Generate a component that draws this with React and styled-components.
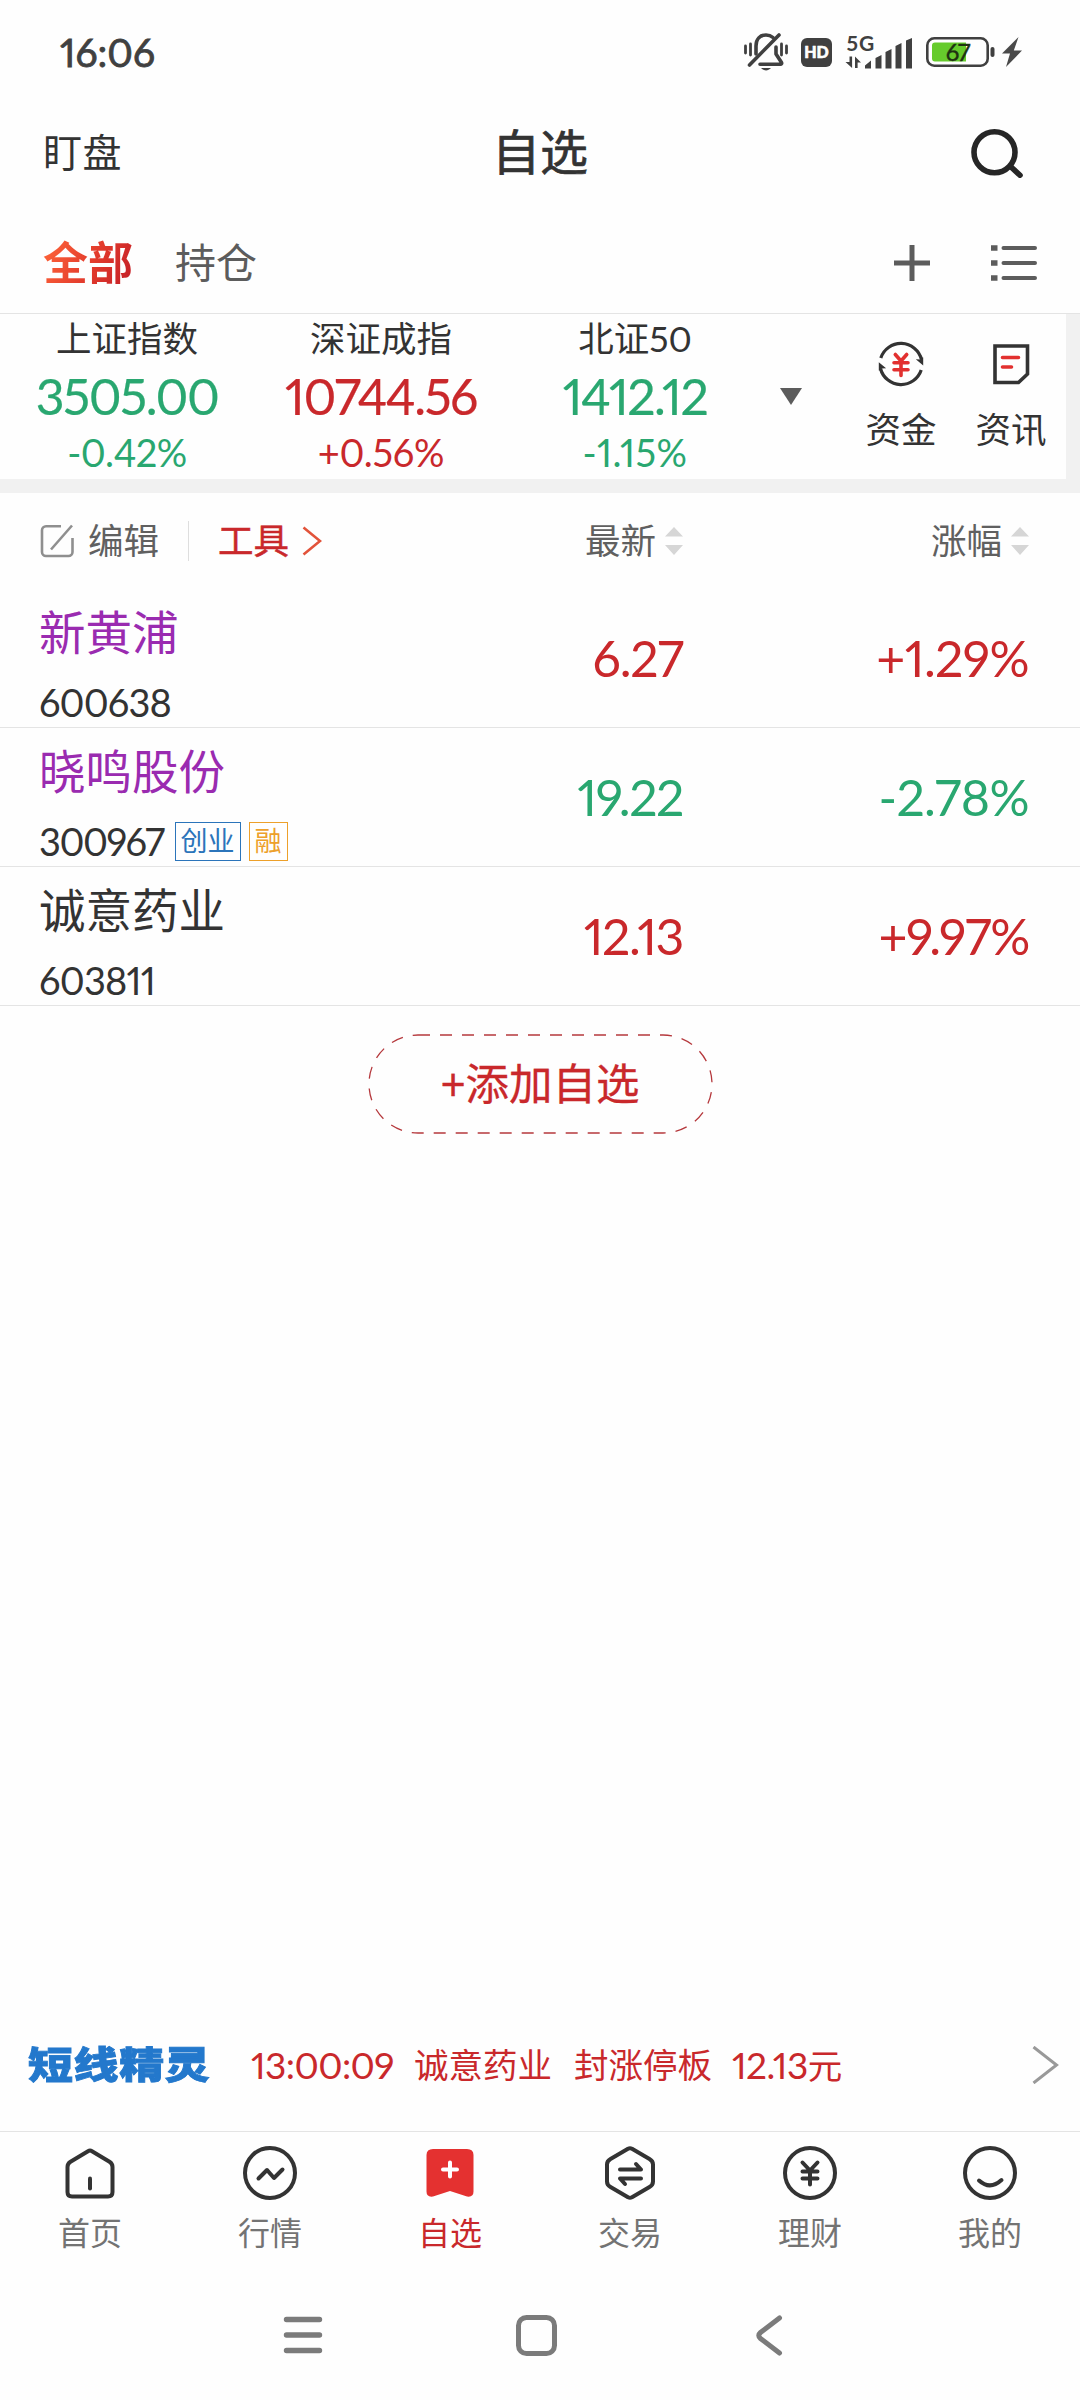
import React from 'react';
import styled, { createGlobalStyle } from 'styled-components';

const GlobalStyle = createGlobalStyle`
* {
  box-sizing: border-box;
}
body {
  margin: 0;
  background: #fefefe;
  font-family: Lato, 'Noto Sans CJK SC', sans-serif;
  font-variant-numeric: proportional-nums;
  color: #333;
}
svg {
  display: block;
  flex: none;
}
`;

const RED = '#c9282b';
const GREEN = '#29a770';
const DARK = '#333333';
const PURPLE = '#9a2bb0';

const Page = styled.div`
display: flex;
flex-direction: column;
width: 1080px;
height: 2400px;
background: #fefefe;
white-space: nowrap;
overflow: hidden;`

const StatusBar = styled.div`
display: flex;
align-items: center;
justify-content: space-between;
height: 104px;
padding: 0 58px 0 60px;`

const Clock = styled.span`
font-size: 39px;
line-height: 50px;
color: #404040;
-webkit-text-stroke: 0.8px #404040;`

const StatusIcons = styled.div`
display: flex;
align-items: center;
gap: 13px;
svg:last-child {
  margin-left: -6px;
}`

const Header = styled.header`
display: grid;
grid-template-columns: 1fr auto 1fr;
align-items: center;
height: 96px;
padding: 0 54px 0 43px;`

const Watch = styled.span`
font-size: 39px;
line-height: 60px;
letter-spacing: 0.6px;`

const Title = styled.h1`
margin: 0 0 0 11px;
font-size: 48px;
font-weight: 400;
line-height: 60px;
-webkit-text-stroke: 0.7px #333;`

const HeaderRight = styled.div`
display: flex;
justify-content: flex-end;`

const Tabs = styled.div`
display: flex;
align-items: center;
height: 114px;
padding: 13px 42px 0 43px;
border-bottom: 1px solid #e4e4e4;`

const Tab = styled.span`
font-size: 41px;
line-height: 60px;
color: #5c5c5c;
margin-right: auto;`

const ActiveTab = styled(Tab)`
font-size: 45px;
font-weight: 700;
margin-right: 42px;
color: transparent;
background: linear-gradient(115deg, #fb6038 10%, #e23a2c 55%, #c41f27 95%);
background-clip: text;
-webkit-background-clip: text;`

const TabIcons = styled.div`
display: flex;
align-items: center;
gap: 61px;`

const IndexPanel = styled.section`
display: flex;
height: 179px;
border-right: 14px solid #f1f1f1;
border-bottom: 14px solid #f1f1f1;`

const IndexCell = styled.div`
width: 254px;
text-align: center;`

const IndexName = styled.div`
font-size: 35.5px;
line-height: 50px;`

const IndexValue = styled.div`
font-size: 50px;
line-height: 64px;
letter-spacing: -1.5px;
color: ${p => p.$color};
-webkit-text-stroke: 0.2px ${p => p.$color};`

const IndexChange = styled.div`
font-size: 38px;
line-height: 48px;
letter-spacing: ${p => p.$gap || 0}px;
color: ${p => p.$color};`

const DropCell = styled.div`
width: 84px;
padding: 74px 0 0 18px;`

const Quick = styled.div`
display: flex;
flex-direction: column;
align-items: center;
width: 110px;
padding-top: 27px;`

const QuickLabel = styled.span`
margin-top: 23px;
font-size: 35.5px;
line-height: 40px;`

const ListGrid = styled.div`
display: grid;
grid-template-columns: 380px 264px 346px;
padding-left: 39px;`

const ListHead = styled(ListGrid)`
align-items: center;
height: 96px;
font-size: 35.5px;
line-height: 50px;
color: #606060;`

const Tools = styled.div`
display: flex;
align-items: center;`

const EditLabel = styled.span`
margin-left: 13px;`

const Divider = styled.span`
width: 1px;
height: 40px;
margin: 0 29px 0 29px;
background: #dedede;`

const ToolLabel = styled.span`
margin-right: 13px;
color: ${RED};
-webkit-text-stroke: 0.5px ${RED};`

const SortHead = styled.div`
display: flex;
align-items: center;
justify-content: flex-end;
gap: 9px;`

const StockRow = styled(ListGrid)`
height: 139px;
border-bottom: 1px solid #e4e4e4;`

const StockName = styled.div`
margin-top: 13px;
font-size: 46.5px;
line-height: 60px;
color: ${p => p.$color};`

const CodeLine = styled.div`
display: flex;
align-items: center;
height: 46px;
margin-top: 17px;`

const Code = styled.span`
font-size: 38px;
letter-spacing: ${p => p.$gap || 0}px;
margin-right: 11px;`

const Tag = styled.span`
height: 39px;
margin-right: 8px;
padding: 0 5px;
border: 1px solid ${p => p.$color};
color: ${p => p.$color};
font-size: 27px;
line-height: 36px;`

const Figure = styled.div`
align-self: center;
text-align: right;
font-size: 50px;
line-height: 60px;
letter-spacing: ${p => p.$gap || 0}px;
color: ${p => p.$color};`

const AddButton = styled.button`
position: relative;
align-self: center;
width: 345px;
height: 100px;
margin-top: 28px;
padding: 0 0 2px;
border: none;
background: none;
font: inherit;
font-size: 43.5px;
line-height: 98px;
color: ${RED};
-webkit-text-stroke: 0.3px ${RED};`

const AddOutline = styled.svg`
position: absolute;
inset: 0;`

const Ticker = styled.div`
display: flex;
align-items: center;
height: 132px;
margin-top: auto;
padding: 0 21px 0 28px;
color: ${RED};
font-size: 34.5px;
line-height: 50px;`

const TickerLogo = styled.span`
width: 223px;
font-size: 45px;
font-weight: 900;
letter-spacing: 0.6px;
color: #2378cc;
-webkit-text-stroke: 1px #2378cc;
transform: scaleY(0.83);`

const TickerTime = styled.span`
width: 163px;
font-size: 37px;
letter-spacing: -0.6px;`

const TickerText = styled.span`
width: ${p => p.$width}px;`

const TickerPrice = styled.span`
margin-right: auto;
letter-spacing: -0.6px;
big {
  font-size: 37px;
}`

const BottomNav = styled.nav`
display: flex;
height: 139px;
border-top: 1px solid #e4e4e4;`

const NavItem = styled.div`
display: flex;
flex-direction: column;
align-items: center;
width: 180px;
padding-top: 14px;
color: ${p => (p.$active ? RED : '#737373')};
font-size: 32px;
line-height: 40px;`

const NavLabel = styled.span`
margin-top: 13px;`

const SystemNav = styled.div`
display: flex;
align-items: center;
height: 130px;
padding-left: 283px;
gap: 193px;
svg:last-child {
  margin-left: 5px;
}`

const BellOff = () => (
  <svg width="44" height="38" viewBox="0 0 44 38" fill="none" stroke="#404040" strokeWidth="3.6" strokeLinecap="round" strokeLinejoin="round">
    <path d="M12 21V13C12 6 16 2 22 2c2.500 0 5 .8 7 2.500" />
    <path d="M32 14v7l5.500 8.500c.5 1-.2 1.800-1 1.800H16" />
    <path d="M5.500 32L35 2" />
    <path d="M1.500 13v7M6.500 11v11M37.500 11v11M42.500 13v7" strokeWidth="2.800" />
    <path d="M17 35c3 3.200 7 3.200 10 0z" fill="#404040" stroke="none" />
  </svg>
);

const HdIcon = () => (
  <svg width="31" height="29" viewBox="0 0 31 29">
    <rect width="31" height="29" rx="6" fill="#404040" />
    <text x="15.500" y="20.200" fontSize="16" fontWeight="900" textAnchor="middle" fill="#fff" stroke="#fff" strokeWidth=".6">HD</text>
  </svg>
);

const SignalIcon = () => (
  <svg width="68" height="52" viewBox="0 -8 68 52" fill="#404040">
    <text x="1.500" y="16.500" fontSize="21" fontWeight="700" letterSpacing="1">5G</text>
    <path d="M4.500 22.500h2.600V34L.5 28h4zM10 34V22.500l6 6h-3.400V34z" />
    <path d="M20 34.500v-3l6-5v8zM30.500 34.500V24l6-3v13.500zM40.500 34.500V18l6-3v19.500zM50.500 34.500V12l6-3v25.500zM61 34.500V6.500l6-2.500v30.500z" />
  </svg>
);

const BatteryIcon = () => (
  <svg width="69" height="30" viewBox="0 0 69 30">
    <rect x="1.300" y="1.300" width="60.400" height="27.400" rx="7" fill="none" stroke="#404040" strokeWidth="2.600" />
    <path d="M9 5.500h31v19H9a3 3 0 0 1-3-3v-13a3 3 0 0 1 3-3z" fill="#66cb2c" />
    <rect x="64.500" y="10" width="4" height="10" rx="2" fill="#404040" />
    <text x="31.500" y="23.500" fontSize="24" letterSpacing="-1.200" textAnchor="middle" fill="#1e3311" stroke="#1e3311" strokeWidth=".4">67</text>
  </svg>
);

const BoltIcon = () => (
  <svg width="20" height="30" viewBox="0 0 20 30">
    <path d="M16.500 0L0 16.500h8L4 30l16-16.500h-8.200z" fill="#4a4a4a" />
  </svg>
);

const SearchIcon = () => (
  <svg width="56" height="52" viewBox="0 0 56 52" fill="none" stroke="#262626" strokeWidth="5.600" strokeLinecap="round">
    <circle cx="24.500" cy="26.300" r="20.500" />
    <path d="M40.500 40.500l9.500 8.700" />
  </svg>
);

const PlusIcon = () => (
  <svg width="36" height="36" viewBox="0 0 36 36" stroke="#5c5c5c" strokeWidth="5">
    <path d="M18 0v36M0 18h36" />
  </svg>
);

const ListIcon = () => (
  <svg width="47" height="38" viewBox="0 0 47 38" stroke="#5c5c5c" strokeWidth="4" strokeLinecap="round">
    <path d="M12.500 4h31.500M12.500 19h31.500M12.500 34h31.500" />
    <path d="M0 4h6.500M0 19h6.500M0 34h6.500" strokeWidth="5.500" strokeLinecap="butt" />
  </svg>
);

const DropIcon = () => (
  <svg width="22" height="17" viewBox="0 0 22 17">
    <path d="M0 0h22L11 17z" fill="#5c5c5c" />
  </svg>
);

const FundIcon = () => (
  <svg width="46" height="46" viewBox="0 0 46 46" fill="none" strokeLinecap="round" strokeLinejoin="round">
    <path d="M2.800 17A21.200 21.200 0 0 1 43.500 18.500M43.200 29A21.200 21.200 0 0 1 2.500 27.500" stroke="#333" strokeWidth="3.200" strokeLinecap="butt" />
    <path d="M45.200 24.500V16.500h-3l.3 2-4.700-.3zM.8 21.300V29.500h3l-.3-2 4.600-.2z" fill="#333" />
    <path d="M17.300 13.500l5.700 6.500 5.700-6.500M23 20v14.500M16 21.800h14M16 28.800h14" stroke="#e2302f" strokeWidth="3.600" />
  </svg>
);

const NewsIcon = () => (
  <svg width="38" height="46" viewBox="0 0 38 46" fill="none" strokeLinejoin="miter">
    <path d="M3 5h32.500v28L26.500 41.500H3z" stroke="#333" strokeWidth="3.600" />
    <path d="M10.500 16.500h16M10.500 26h9" stroke="#e2302f" strokeWidth="3.600" strokeLinecap="round" />
  </svg>
);

const EditIcon = () => (
  <svg width="36" height="34" viewBox="0 0 36 34" fill="none" stroke="#8f8f8f" strokeWidth="2.600">
    <path d="M22 2.200H7a4 4 0 0 0-4 4V28a4 4 0 0 0 4 4h22.500a4 4 0 0 0 4-4V14" />
    <path d="M33 1.500L12 25.500" />
  </svg>
);

const ToolArrow = () => (
  <svg width="20" height="30" viewBox="0 0 20 30" fill="none" stroke="#e2533a" strokeWidth="2.600">
    <path d="M1.500 1.500L18 15 1.500 28.500" />
  </svg>
);

const SortIcon = () => (
  <svg width="18" height="28" viewBox="0 0 18 28" fill="#d6d6d6">
    <path d="M9 0l9 9.500H0zM9 28l9-10H0z" />
  </svg>
);

const MoreArrow = () => (
  <svg width="27" height="38" viewBox="0 0 27 38" fill="none" stroke="#999" strokeWidth="3">
    <path d="M1.500 1L24.500 19 1.500 37" />
  </svg>
);

const NavSvg = ({ children }) => (
  <svg width="54" height="54" viewBox="0 0 54 54" fill="none" stroke={DARK} strokeWidth="4" strokeLinecap="round" strokeLinejoin="round">
    {children}
  </svg>
);

const navItems = [
  {
    label: '首页',
    icon: (
      <NavSvg>
        <path d="M7.500 15.700L25 5.200q2-1.200 4 0L46.500 15.700Q49.500 17.500 49.500 21v25q0 4.500-4.500 4.500H9Q4.500 50.500 4.500 46V21q0-3.500 3-5.300z" />
        <path d="M27 32.500v10" />
      </NavSvg>
    ),
  },
  {
    label: '行情',
    icon: (
      <NavSvg>
        <circle cx="27" cy="27" r="25" />
        <path d="M15.500 32.500L24 24l7 8 8.500-8.500" />
      </NavSvg>
    ),
  },
  {
    label: '自选',
    active: true,
    icon: (
      <NavSvg>
        <path d="M10 3h34q6.500 0 6.500 6v36.500q0 6-6.500 5L27 45 10 50.500q-6.500 1-6.500-5V9q0-6 6.500-6z" fill="#e43130" stroke="none" />
        <path d="M27 16.500v14M20 23.500h14" stroke="#fff" />
      </NavSvg>
    ),
  },
  {
    label: '交易',
    icon: (
      <NavSvg>
        <path d="M25 2.800q2-1 4 0L46.500 13Q50 15 50 18.500v17q0 3.500-3.500 5.500L29 51.200q-2 1-4 0L7.500 41Q4 39 4 35.500v-17Q4 15 7.500 13z" />
        <path d="M17 23.500h21l-5-5.500M38 32.500H17l5 5.500" />
      </NavSvg>
    ),
  },
  {
    label: '理财',
    icon: (
      <NavSvg>
        <circle cx="27" cy="27" r="25" />
        <path d="M19.500 16.500l7.500 8 7.500-8M27 24.500v14M19.500 25.500h15M19.500 32.500h15" />
      </NavSvg>
    ),
  },
  {
    label: '我的',
    icon: (
      <NavSvg>
        <circle cx="27" cy="27" r="25" />
        <path d="M16 34.500q11 10 22.500-.5" />
      </NavSvg>
    ),
  },
];

const indexes = [
  { name: '上证指数', value: '3505.00', change: '-0.42%', color: GREEN, gap: -0.4 },
  { name: '深证成指', value: '10744.56', change: '+0.56%', color: RED, gap: -0.3 },
  { name: '北证50', value: '1412.12', change: '-1.15%', color: GREEN, gap: 0.4 },
];

const stocks = [
  { name: '新黄浦', code: '600638', price: '6.27', change: '+1.29%', color: RED, nameColor: PURPLE, codeGap: -0.9, priceGap: -1.1, changeGap: -0.6 },
  {
    name: '晓鸣股份',
    code: '300967',
    price: '19.22',
    change: '-2.78%',
    color: GREEN,
    nameColor: PURPLE,
    codeGap: -1.5,
    priceGap: -1.4,
    changeGap: -0.6,
    tags: [
      { text: '创业', color: '#2b74ba' },
      { text: '融', color: '#eda02a' },
    ],
  },
  { name: '诚意药业', code: '603811', price: '12.13', change: '+9.97%', color: RED, nameColor: DARK, codeGap: -0.8, priceGap: -1.4, changeGap: -1.3 },
];

function App() {
  return (
    <Page>
      <GlobalStyle />
      <StatusBar>
        <Clock>16:06</Clock>
        <StatusIcons>
          <BellOff />
          <HdIcon />
          <SignalIcon />
          <BatteryIcon />
          <BoltIcon />
        </StatusIcons>
      </StatusBar>

      <Header>
        <Watch>盯盘</Watch>
        <Title>自选</Title>
        <HeaderRight>
          <SearchIcon />
        </HeaderRight>
      </Header>

      <Tabs>
        <ActiveTab>全部</ActiveTab>
        <Tab>持仓</Tab>
        <TabIcons>
          <PlusIcon />
          <ListIcon />
        </TabIcons>
      </Tabs>

      <IndexPanel>
        {indexes.map(item => (
          <IndexCell key={item.name}>
            <IndexName>{item.name}</IndexName>
            <IndexValue $color={item.color}>{item.value}</IndexValue>
            <IndexChange $color={item.color} $gap={item.gap}>{item.change}</IndexChange>
          </IndexCell>
        ))}
        <DropCell>
          <DropIcon />
        </DropCell>
        <Quick>
          <FundIcon />
          <QuickLabel>资金</QuickLabel>
        </Quick>
        <Quick>
          <NewsIcon />
          <QuickLabel>资讯</QuickLabel>
        </Quick>
      </IndexPanel>

      <ListHead>
        <Tools>
          <EditIcon />
          <EditLabel>编辑</EditLabel>
          <Divider />
          <ToolLabel>工具</ToolLabel>
          <ToolArrow />
        </Tools>
        <SortHead>最新<SortIcon /></SortHead>
        <SortHead>涨幅<SortIcon /></SortHead>
      </ListHead>

      {stocks.map(stock => (
        <StockRow key={stock.code}>
          <div>
            <StockName $color={stock.nameColor}>{stock.name}</StockName>
            <CodeLine>
              <Code $gap={stock.codeGap}>{stock.code}</Code>
              {stock.tags && stock.tags.map(tag => (
                <Tag key={tag.text} $color={tag.color}>{tag.text}</Tag>
              ))}
            </CodeLine>
          </div>
          <Figure $color={stock.color} $gap={stock.priceGap}>{stock.price}</Figure>
          <Figure $color={stock.color} $gap={stock.changeGap}>{stock.change}</Figure>
        </StockRow>
      ))}

      <AddButton>
        <AddOutline width="345" height="100" fill="none" stroke="#b5383c" strokeWidth="1.300" strokeDasharray="12 10">
          <rect x="1" y="1" width="343" height="98" rx="49" />
        </AddOutline>
        +添加自选
      </AddButton>

      <Ticker>
        <TickerLogo>短线精灵</TickerLogo>
        <TickerTime>13:00:09</TickerTime>
        <TickerText $width={160}>诚意药业</TickerText>
        <TickerText $width={158}>封涨停板</TickerText>
        <TickerPrice><big>12.13</big>元</TickerPrice>
        <MoreArrow />
      </Ticker>

      <BottomNav>
        {navItems.map(item => (
          <NavItem key={item.label} $active={item.active}>
            {item.icon}
            <NavLabel>{item.label}</NavLabel>
          </NavItem>
        ))}
      </BottomNav>

      <SystemNav>
        <svg width="40" height="38" viewBox="0 0 40 38" stroke="#7b7b7b" strokeWidth="5.400" strokeLinecap="round">
          <path d="M3.500 3.500h33M3.500 19h33M3.500 34.500h33" />
        </svg>
        <svg width="41" height="41" viewBox="0 0 41 41" fill="none" stroke="#7b7b7b" strokeWidth="5">
          <rect x="2.500" y="2.500" width="36" height="36" rx="8" />
        </svg>
        <svg width="28" height="41" viewBox="0 0 28 41" fill="none" stroke="#7b7b7b" strokeWidth="5" strokeLinecap="round">
          <path d="M24.500 3L5.500 17.500q-3.500 3 0 6L24.500 38" />
        </svg>
      </SystemNav>
    </Page>
  );
}

export default App;
